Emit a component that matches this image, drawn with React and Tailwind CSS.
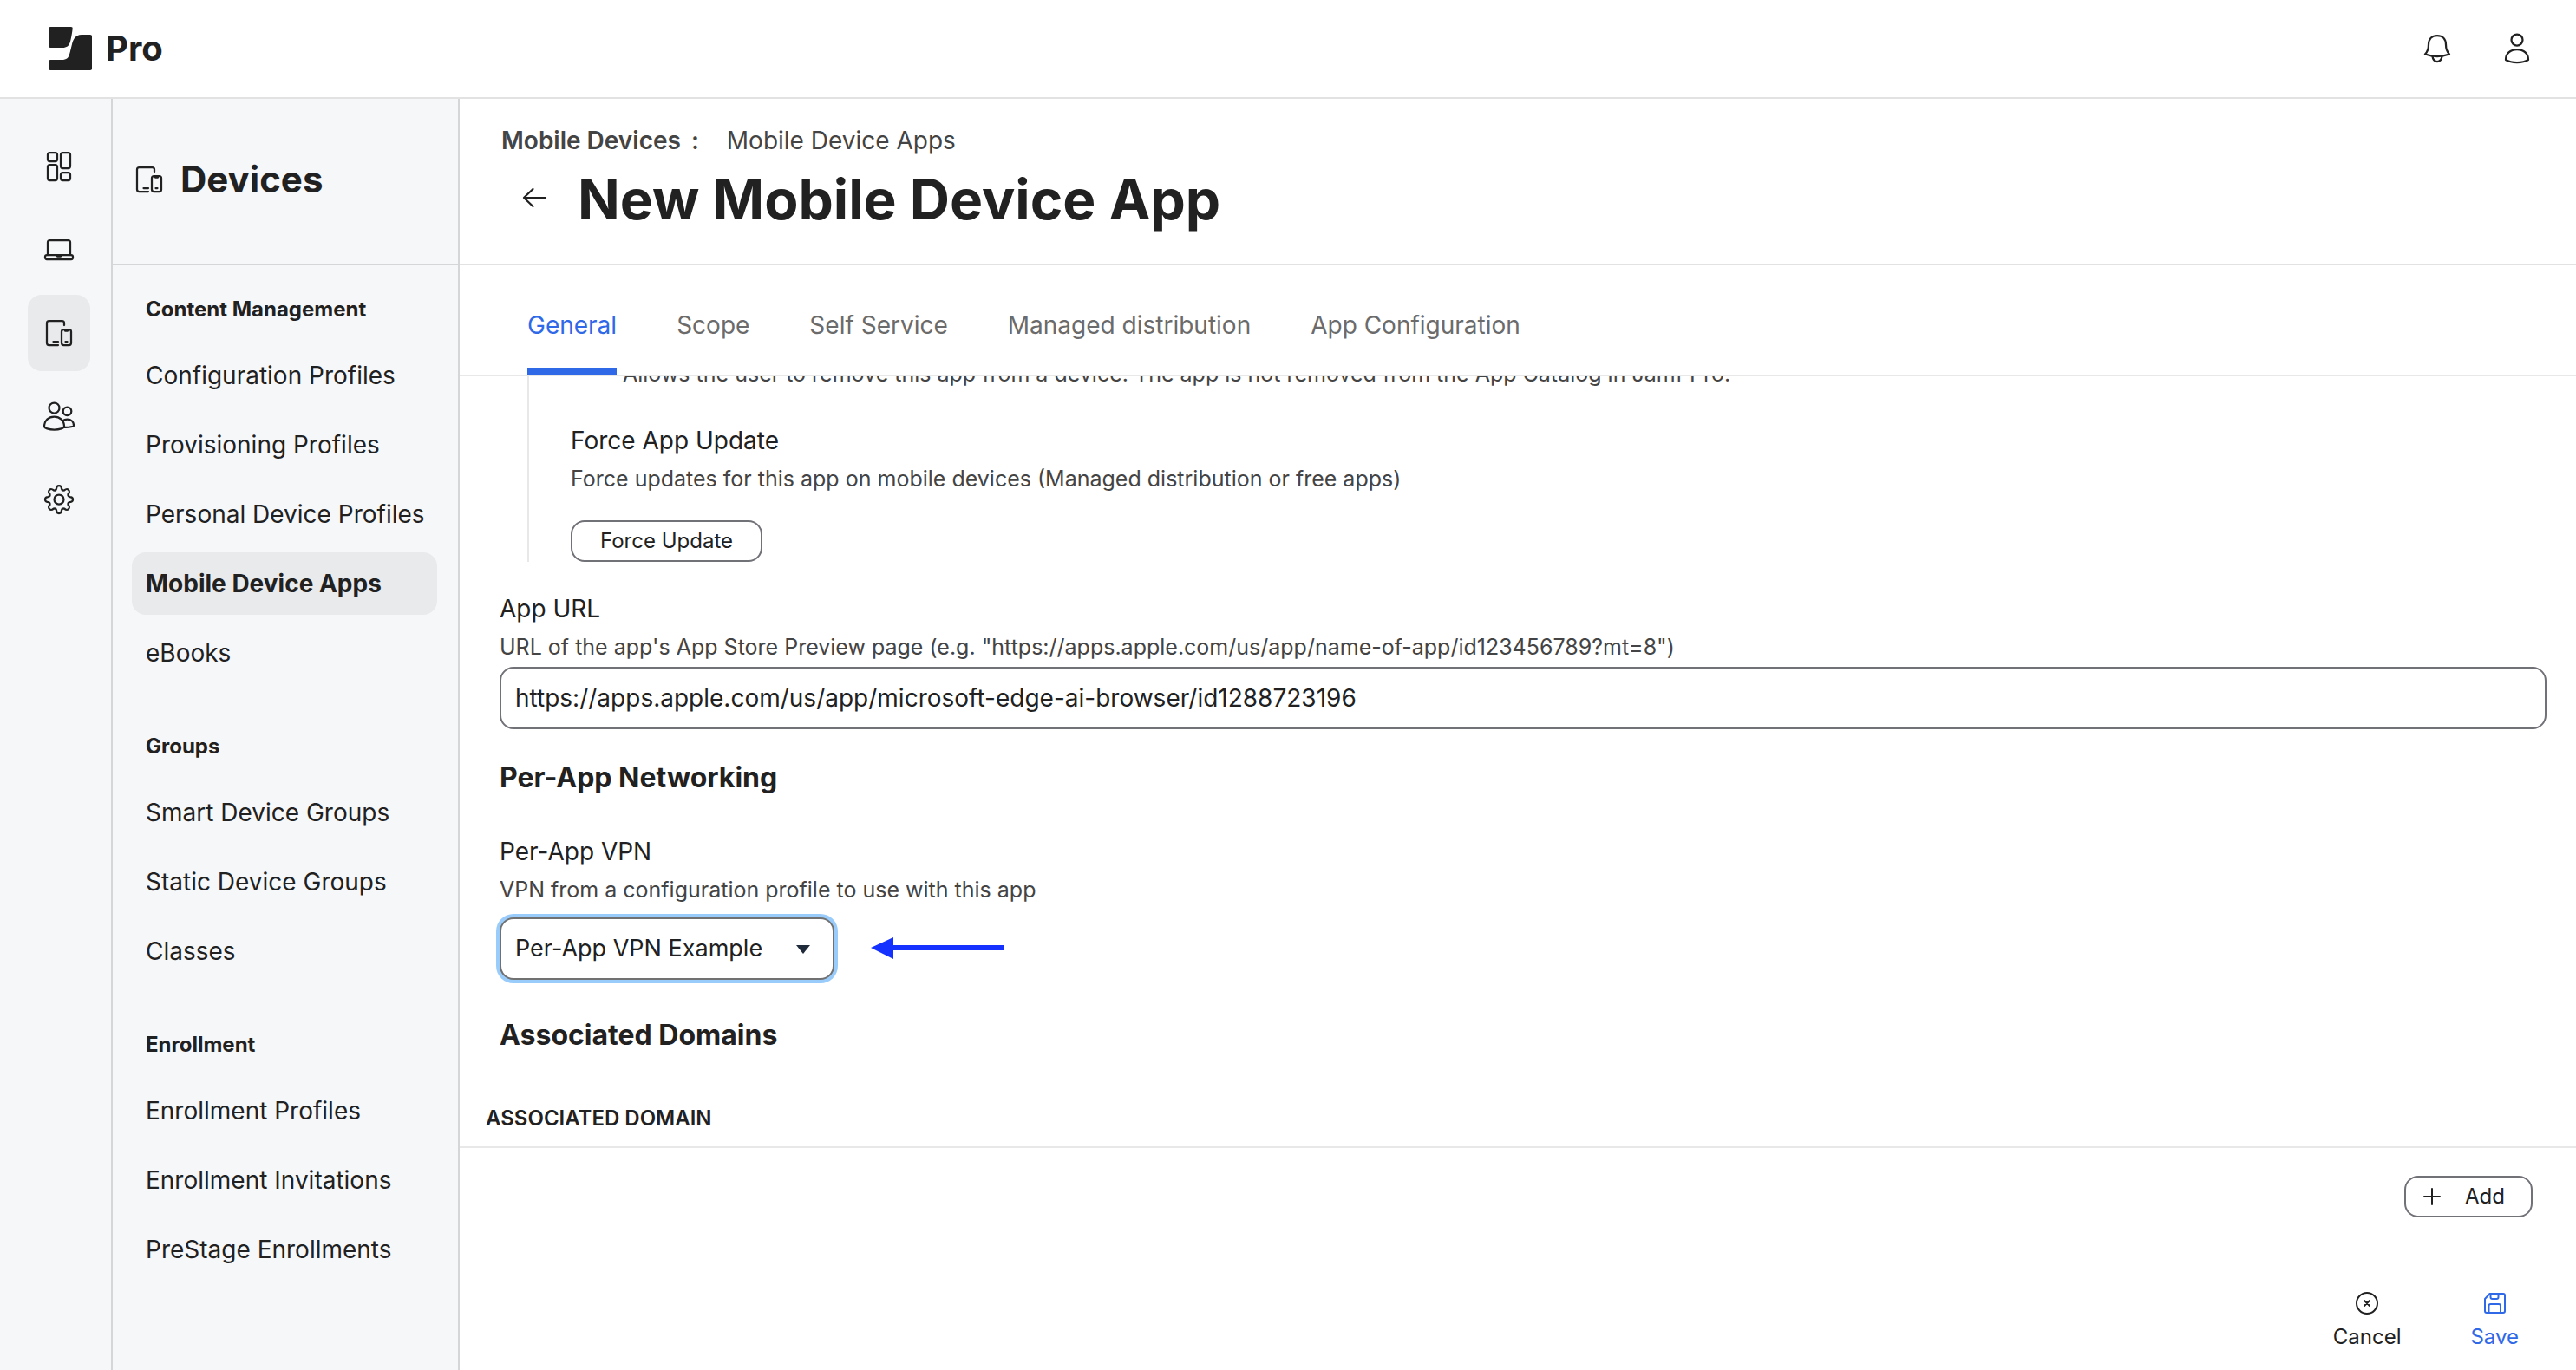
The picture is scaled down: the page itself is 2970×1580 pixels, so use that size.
const stroke = {
  fill: "none",
  stroke: "currentColor",
  strokeWidth: 2.25,
  strokeLinecap: "round",
  strokeLinejoin: "round",
  "aria-hidden": true,
};

const Logo = () => (
  <svg width="50" height="50" viewBox="0 0 50 50" fill="#212121" aria-hidden="true">
    <path d="M2 0H26Q28 0 27.700 2C27 8 26 13 25 17C23.500 22 21 24 16 24H2Q0 24 0 22V2Q0 0 2 0Z" />
    <path d="M48 9H38C31 9 28.500 14 27 20L24.500 30C23 36 21 38 15 38H2Q0 38 0 40V48Q0 50 2 50H48Q50 50 50 48V11Q50 9 48 9Z" />
  </svg>
);

const DashboardIcon = () => (
  <svg width="36" height="36" viewBox="0 0 36 36" {...stroke}>
    <rect x="5" y="2" width="11" height="10" rx="2.500" />
    <rect x="20" y="2" width="11" height="18" rx="2.500" />
    <rect x="5" y="16" width="11" height="18" rx="2.500" />
    <rect x="20" y="25" width="11" height="9" rx="2.500" />
  </svg>
);

const LaptopIcon = () => (
  <svg width="36" height="36" viewBox="0 0 36 36" {...stroke}>
    <path d="M5 24V9.500Q5 7 7.500 7H28.500Q31 7 31 9.500V24" />
    <rect x="2" y="24" width="32" height="5" rx="2" />
    <path d="M16 25.500H20" />
  </svg>
);

const DevicesIcon = () => (
  <svg width="36" height="36" viewBox="0 0 36 36" {...stroke}>
    <path d="M17 32H6.500Q4 32 4 29.500V6.500Q4 4 6.500 4H21.500Q24 4 24 6.500V9" />
    <rect x="21" y="14" width="11" height="18" rx="2.500" />
    <path d="M25 15.500H28M25.500 28H27.500M11.500 28H17" />
  </svg>
);

const UsersIcon = () => (
  <svg width="36" height="36" viewBox="0 0 36 36" {...stroke}>
    <circle cx="12.500" cy="8.500" r="6" />
    <circle cx="27.500" cy="12.300" r="4.800" />
    <path d="M1 30C1 23 6 18.500 12.500 18.500S24 23 24 30C24 31.500 19 33.500 12.500 33.500S1 31.500 1 30Z" />
    <path d="M22 23.500Q24.500 21.500 27.500 21.500C32 21.500 35 24.500 35 29Q33 31 24 30.800" />
  </svg>
);

const GearIcon = () => (
  <svg width="36" height="36" viewBox="0 0 36 36" {...stroke}>
    <circle cx="18" cy="18" r="5.500" />
    <path d="M15 5.500C15 3 16 2 18 2S21 3 21 5.500Q21.500 8 24 7.500C26.500 5.500 27.500 5.500 29 7S30.500 9.500 28.500 12Q28 14.500 30.500 15C33 15 34 16 34 18S33 21 30.500 21Q28 21.500 28.500 24C30.500 26.500 30.500 27.500 29 29S26.500 30.500 24 28.500Q21.500 28 21 30.500C21 33 20 34 18 34S15 33 15 30.500Q14.500 28 12 28.500C9.500 30.500 8.500 30.500 7 29S5.500 26.500 7.500 24Q8 21.500 5.500 21C3 21 2 20 2 18S3 15 5.500 15Q8 14.500 7.500 12C5.500 9.500 5.500 8.500 7 7S9.500 5.500 12 7.500Q14.500 8 15 5.500Z" />
  </svg>
);

const BellIcon = () => (
  <svg width="36" height="36" viewBox="0 0 36 36" {...stroke}>
    <path d="M8 13.500C8 7 12 3 18 3S28 7 28 13.500C28 18.500 29 21.500 32 24.500Q25 27 18 27T4 24.500C7 21.500 8 18.500 8 13.500Z" />
    <path d="M12.500 27C13 30.500 15 33 18 33S23 30.500 23.500 27" />
  </svg>
);

const UserIcon = () => (
  <svg width="36" height="36" viewBox="0 0 36 36" {...stroke}>
    <circle cx="18" cy="8" r="6.500" />
    <path d="M5 31C5 24 10 19 18 19S31 24 31 31Q26 34 18 34T5 31Z" />
  </svg>
);

const BackIcon = () => (
  <svg width="36" height="36" viewBox="0 0 36 36" {...stroke}>
    <path d="M31 16H6M16.500 6L6 16L16.500 26" />
  </svg>
);

const PlusIcon = () => (
  <svg width="20" height="20" viewBox="0 0 20 20" {...stroke} strokeWidth="2">
    <path d="M10 1V19M1 10H19" />
  </svg>
);

const CancelIcon = () => (
  <svg width="26" height="26" viewBox="0 0 26 26" {...stroke} strokeWidth="2">
    <circle cx="13" cy="13" r="12" />
    <path d="M10 10L16 16M16 10L10 16" />
  </svg>
);

const SaveIcon = () => (
  <svg width="26" height="26" viewBox="0 0 26 26" {...stroke} strokeWidth="2">
    <path d="M7.500 2H23Q25 2 25 4V22Q25 24 23 24H4Q2 24 2 22V8Z" />
    <path d="M8.500 2V6Q8.500 8 10.500 8H15.500Q17.500 8 17.500 6V2" />
    <path d="M6.500 24V16Q6.500 14 8.500 14H18Q20 14 20 16V24" />
  </svg>
);

const railItems = [
  { label: "Dashboard", Icon: DashboardIcon },
  { label: "Computers", Icon: LaptopIcon },
  { label: "Devices", Icon: DevicesIcon, active: true },
  { label: "Users", Icon: UsersIcon },
  { label: "Settings", Icon: GearIcon },
];

const sections = [
  {
    title: "Content Management",
    items: [
      "Configuration Profiles",
      "Provisioning Profiles",
      "Personal Device Profiles",
      "Mobile Device Apps",
      "eBooks",
    ],
  },
  { title: "Groups", items: ["Smart Device Groups", "Static Device Groups", "Classes"] },
  {
    title: "Enrollment",
    items: ["Enrollment Profiles", "Enrollment Invitations", "PreStage Enrollments"],
  },
];

const tabs = ["General", "Scope", "Self Service", "Managed distribution", "App Configuration"];

function TopBar() {
  return (
    <header className="flex h-[114px] shrink-0 items-center justify-between border-b-2 border-[#e2e2e2] pr-[50px] pl-14">
      <a href="#home" className="flex items-center gap-4 text-[40px] leading-[48px] font-bold">
        <Logo />
        Pro
      </a>
      <div className="flex gap-14">
        <button type="button" aria-label="Notifications">
          <BellIcon />
        </button>
        <button type="button" aria-label="Account">
          <UserIcon />
        </button>
      </div>
    </header>
  );
}

function Rail() {
  return (
    <nav
      aria-label="Primary"
      className="flex w-[130px] shrink-0 flex-col gap-2 border-r-2 border-[#d5d6d8] bg-[#f6f7f9] pt-[34px] pl-8"
    >
      {railItems.map(({ label, Icon, active }) => (
        <a
          key={label}
          href={"#" + label.toLowerCase()}
          aria-label={label}
          className={
            "flex h-[88px] w-[72px] items-center justify-center rounded-2xl " +
            (active ? "bg-[#e9eaec]" : "")
          }
        >
          <Icon />
        </a>
      ))}
    </nav>
  );
}

function Sidebar() {
  return (
    <aside className="flex w-[400px] shrink-0 flex-col border-r-2 border-[#d5d6d8] bg-[#f6f7f9]">
      <div className="flex h-48 items-center gap-[18px] border-b-2 border-[#d5d6d8] pb-1 pl-6">
        <DevicesIcon />
        <h2 className="text-[42px] leading-[48px] font-bold">Devices</h2>
      </div>
      <nav aria-label="Devices" className="flex flex-col gap-[52px] pt-[31px] pr-6 pl-[22px]">
        {sections.map((section) => (
          <section key={section.title}>
            <h3 className="mb-5 pl-4 text-[24px] leading-[40px] font-bold">{section.title}</h3>
            <ul className="flex flex-col gap-2">
              {section.items.map((item) => (
                <li key={item}>
                  <a
                    href="#item"
                    className={
                      "flex h-[72px] items-center rounded-2xl pl-4 text-[28px] leading-[40px] whitespace-nowrap " +
                      (item === "Mobile Device Apps" ? "bg-[#e9eaec] font-bold" : "")
                    }
                  >
                    {item}
                  </a>
                </li>
              ))}
            </ul>
          </section>
        ))}
      </nav>
    </aside>
  );
}

function PageHeader() {
  return (
    <div className="h-48 shrink-0 border-b-2 border-[#e2e2e2] pt-7 pl-12">
      <nav aria-label="Breadcrumb" className="flex text-[28px] leading-[40px] text-[#444444]">
        <a href="#mobile-devices" className="font-semibold">
          Mobile Devices
        </a>
        <span className="ml-3 font-semibold">:</span>
        <a href="#mobile-device-apps" className="ml-8">
          Mobile Device Apps
        </a>
      </nav>
      <div className="flex items-center gap-8 pl-5">
        <button type="button" aria-label="Back">
          <BackIcon />
        </button>
        <h1 className="text-[64px] leading-[96px] font-bold">New Mobile Device App</h1>
      </div>
    </div>
  );
}

function Tabs() {
  return (
    <div role="tablist" className="flex h-32 shrink-0 gap-[69px] border-b-2 border-[#e8e8e8] pl-[78px]">
      {tabs.map((tab, i) => (
        <button
          key={tab}
          type="button"
          role="tab"
          aria-selected={i === 0}
          className={
            "border-b-8 pt-5 text-[28px] leading-[40px] " +
            (i === 0 ? "border-[#3069e8] text-[#3069e8]" : "border-transparent text-[#6b6b6b]")
          }
        >
          {tab}
        </button>
      ))}
    </div>
  );
}

function Content() {
  return (
    <div className="min-h-0 flex-1 overflow-hidden">
      <div className="-mt-[21px] pr-[34px] pl-[46px]">
        <div className="ml-8 border-l-2 border-[#e8e8e8] pl-12">
          <p className="pl-[60px] text-[25px] leading-[36px] text-[#444444]">
            Allows the user to remove this app from a device. The app is not removed from the App
            Catalog in Jamf Pro.
          </p>
          <h3 className="mt-[37px] text-[28px] leading-[44px]">Force App Update</h3>
          <p className="text-[25px] leading-[44px] text-[#444444]">
            Force updates for this app on mobile devices (Managed distribution or free apps)
          </p>
          <button
            type="button"
            className="mt-[26px] block h-12 rounded-2xl border-2 border-[#717178] px-8 text-[24px] leading-[40px]"
          >
            Force Update
          </button>
        </div>

        <div className="mt-8 flex flex-col">
          <label htmlFor="app-url" className="text-[28px] leading-[44px]">
            App URL
          </label>
          <p id="app-url-hint" className="text-[25px] leading-[44px] text-[#444444]">
            URL of the app's App Store Preview page (e.g.
            "https://apps.apple.com/us/app/name-of-app/id123456789?mt=8")
          </p>
          <input
            id="app-url"
            type="text"
            aria-describedby="app-url-hint"
            defaultValue="https://apps.apple.com/us/app/microsoft-edge-ai-browser/id1288723196"
            className="mt-px h-[72px] w-full rounded-2xl border-2 border-[#717178] px-4 text-[28px] leading-[40px]"
          />
        </div>

        <h2 className="mt-9 text-[32px] leading-[40px] font-bold">Per-App Networking</h2>
        <div className="mt-[43px]">
          <label htmlFor="vpn" className="block text-[28px] leading-[44px]">
            Per-App VPN
          </label>
          <p className="text-[25px] leading-[44px] text-[#444444]">
            VPN from a configuration profile to use with this app
          </p>
          <div className="mt-[10px] flex items-center gap-[42px]">
            <div className="relative">
              <select
                id="vpn"
                className="block h-[72px] appearance-none rounded-2xl border-2 border-[#717171] bg-white pr-20 pl-4 text-[27px] leading-[40px] ring-4 ring-[#9accfb]"
              >
                <option>Per-App VPN Example</option>
              </select>
              <svg
                width="16"
                height="10"
                viewBox="0 0 16 10"
                className="pointer-events-none absolute top-8 right-7"
                fill="#1f2a3a"
                aria-hidden="true"
              >
                <path d="M0 0H16L8 10Z" />
              </svg>
            </div>
            <svg width="154" height="26" viewBox="0 0 154 26" fill="#1531ff" aria-hidden="true">
              <path d="M0 12L26 0V9H154V15H26V25Z" />
            </svg>
          </div>
        </div>

        <h2 className="mt-11 text-[32px] leading-[40px] font-bold">Associated Domains</h2>
      </div>
      <table className="mt-[60px] w-full">
        <thead>
          <tr className="border-b-2 border-[#e8e8e8]">
            <th className="pb-4 pl-[30px] text-left text-[24px] leading-[32px] font-semibold">
              ASSOCIATED DOMAIN
            </th>
          </tr>
        </thead>
      </table>
      <div className="flex justify-end pt-8 pr-[50px]">
        <button
          type="button"
          className="flex h-12 items-center gap-7 rounded-2xl border-2 border-[#717178] pr-[30px] pl-5 text-[24px] leading-[40px]"
        >
          <PlusIcon />
          Add
        </button>
      </div>
    </div>
  );
}

function ActionBar() {
  return (
    <footer className="flex shrink-0 justify-end gap-20 pt-6 pr-[66px] pb-[22px]">
      <button type="button" className="flex flex-col items-center gap-[10px] text-[24px] leading-[32px]">
        <CancelIcon />
        Cancel
      </button>
      <button
        type="button"
        className="flex flex-col items-center gap-[10px] text-[24px] leading-[32px] text-[#3069e8]"
      >
        <SaveIcon />
        Save
      </button>
    </footer>
  );
}

export default function App() {
  return (
    <div className="flex h-screen flex-col bg-white font-['Inter',sans-serif] text-[#212121]">
      <TopBar />
      <div className="flex min-h-0 flex-1">
        <Rail />
        <Sidebar />
        <main className="flex min-w-0 flex-1 flex-col">
          <PageHeader />
          <Tabs />
          <Content />
          <ActionBar />
        </main>
      </div>
    </div>
  );
}
